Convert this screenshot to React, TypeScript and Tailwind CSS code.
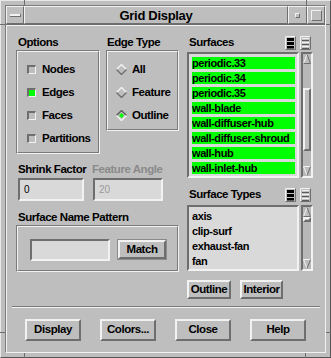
import React from "react";

const RAISED =
  "border-t-[#f2f2f2] border-l-[#f2f2f2] border-b-[#6e6e6e] border-r-[#6e6e6e]";
const SUNKEN =
  "border-t-[#6e6e6e] border-l-[#6e6e6e] border-b-[#f2f2f2] border-r-[#f2f2f2]";
const TXT = "text-[11.5px] font-bold tracking-[-0.45px]";
const LTXT = "text-[11px] font-bold tracking-[-0.42px]";

function Btn({ label, cls }: { label: string; cls: string }) {
  return (
    <div
      className={`flex items-center justify-center border-2 ${RAISED} ${TXT} leading-none ${cls}`}
    >
      {label}
    </div>
  );
}

function Etched({ cls, inner, children }: { cls: string; inner: string; children?: React.ReactNode }) {
  return (
    <div className={`border border-t-[#7a7a7a] border-l-[#7a7a7a] border-b-[#f2f2f2] border-r-[#f2f2f2] ${cls}`}>
      <div
        className={`h-full border border-t-[#f2f2f2] border-l-[#f2f2f2] border-b-[#7a7a7a] border-r-[#7a7a7a] ${inner}`}
      >
        {children}
      </div>
    </div>
  );
}

function Check({ on, label }: { on?: boolean; label: string }) {
  return (
    <div className="h-[23px] flex items-center gap-[6px]">
      <div
        className={`w-[9px] h-[9px] border-t-2 border-l-2 border-b border-r border-t-[#6e6e6e] border-l-[#6e6e6e] border-b-[#f2f2f2] border-r-[#f2f2f2] ${
          on ? "bg-[#00ff00]" : "bg-[#bebebe]"
        }`}
      />
      <span className={TXT}>{label}</span>
    </div>
  );
}

function Radio({ on, label }: { on?: boolean; label: string }) {
  return (
    <div className="h-[23px] flex items-center gap-[5px]">
      <svg width="11" height="11" viewBox="0 0 11 11">
        <polygon points="5.5,0.5 10.5,5.5 5.5,10.5 0.5,5.5" fill="#bebebe" />
        <path
          d="M0.5 5.5 L5.5 0.5 L10.5 5.5"
          stroke={on ? "#5a5a5a" : "#f2f2f2"}
          strokeWidth="1.4"
          fill="none"
        />
        <path
          d="M0.5 5.5 L5.5 10.5 L10.5 5.5"
          stroke={on ? "#f2f2f2" : "#6e6e6e"}
          strokeWidth="1.4"
          fill="none"
        />
        {on && <polygon points="5.5,3 8,5.5 5.5,8 3,5.5" fill="#00ff00" />}
      </svg>
      <span className={TXT}>{label}</span>
    </div>
  );
}

function ListIcon({ filled }: { filled?: boolean }) {
  return (
    <svg width="11" height="14" viewBox="0 0 11 14">
      <rect x="0" y="0" width="11" height="14" fill="#bebebe" />
      <path d="M0.5 13.5V0.5H10.5" stroke="#f2f2f2" fill="none" />
      <path d="M0.5 13.5H10.5V0.5" stroke="#6e6e6e" fill="none" />
      {filled ? (
        <>
          <rect x="2" y="2" width="7" height="3" fill="#000" />
          <rect x="2" y="6" width="7" height="3" fill="#000" />
          <rect x="2" y="10" width="7" height="2.5" fill="#000" />
        </>
      ) : (
        <>
          <path d="M2 2.5H9M2 6.5H9M2 10.5H9" stroke="#f2f2f2" />
          <path d="M2 4.5H9M2 8.5H9M2 12.5H9" stroke="#5a5a5a" />
        </>
      )}
    </svg>
  );
}

function ArrowUp() {
  return (
    <svg width="8" height="10" viewBox="0 0 8 10" className="block">
      <polygon points="4,0.5 7.5,9.5 0.5,9.5" fill="#bebebe" />
      <path d="M0.5 9.5 L4 0.5" stroke="#f2f2f2" fill="none" />
      <path d="M4 0.5 L7.5 9.5 L0.5 9.5" stroke="#6e6e6e" fill="none" />
    </svg>
  );
}

function ArrowDown() {
  return (
    <svg width="8" height="10" viewBox="0 0 8 10" className="block">
      <polygon points="0.5,0.5 7.5,0.5 4,9.5" fill="#bebebe" />
      <path d="M4 9.5 L0.5 0.5 L7.5 0.5" stroke="#f2f2f2" fill="none" />
      <path d="M7.5 0.5 L4 9.5" stroke="#6e6e6e" fill="none" />
    </svg>
  );
}

function Scrollbar({ thumbTop, thumbH }: { thumbTop: string; thumbH: string }) {
  return (
    <div className={`w-[12px] h-full border-2 ${SUNKEN} bg-[#b8b8b8] flex flex-col`}>
      <ArrowUp />
      <div className={`${thumbTop} ${thumbH} w-[8px] border-2 ${RAISED} bg-[#bebebe]`} />
      <div className="mt-auto">
        <ArrowDown />
      </div>
    </div>
  );
}

const surfaces = [
  "periodic.33",
  "periodic.34",
  "periodic.35",
  "wall-blade",
  "wall-diffuser-hub",
  "wall-diffuser-shroud",
  "wall-hub",
  "wall-inlet-hub",
];
const types = ["axis", "clip-surf", "exhaust-fan", "fan"];

function Tick({ cls }: { cls: string }) {
  return <div className={`absolute bg-[#6e6e6e] ${cls}`} />;
}

export default function App() {
  return (
    <div className="w-[331px] h-[358px] bg-[#bebebe] relative font-['Liberation_Sans',Arial,sans-serif] text-black select-none">
      <div className="w-full h-full border border-t-[#e8e8e8] border-l-[#e8e8e8] border-b-[#555555] border-r-[#555555] p-[4px]">
        <div className="w-full h-full border border-t-[#7a7a7a] border-l-[#7a7a7a] border-b-[#f2f2f2] border-r-[#f2f2f2] flex flex-col">
          {/* title bar */}
          <div className="h-[19px] flex border-b border-b-[#6e6e6e]">
            <div className={`w-[18px] border ${RAISED} flex items-center justify-center`}>
              <div className="w-[11px] h-[3px] bg-[#f2f2f2] border-b border-r border-b-[#6e6e6e] border-r-[#6e6e6e]" />
            </div>
            <div className={`flex-1 border ${RAISED} flex items-center justify-center text-[13px] font-bold tracking-[-0.3px] leading-none`}>
              Grid Display
            </div>
            <div className={`w-[19px] border ${RAISED} flex items-center justify-center`}>
              <div className="w-[5px] h-[5px] border border-t-[#f2f2f2] border-l-[#f2f2f2] border-b-[#6e6e6e] border-r-[#6e6e6e]" />
            </div>
            <div className={`w-[18px] border ${RAISED} flex items-center justify-center`}>
              <div className="w-[11px] h-[11px] border border-t-[#f2f2f2] border-l-[#f2f2f2] border-b-[#6e6e6e] border-r-[#6e6e6e]" />
            </div>
          </div>

          {/* client */}
          <div className="flex-1 flex flex-col border-t border-l border-t-[#f2f2f2] border-l-[#f2f2f2]">
            <div className="mt-[9px] ml-[9px] flex gap-[8px]">
              {/* left column */}
              <div className="w-[163px] flex flex-col">
                <div className="flex gap-[6px]">
                  <div className="flex flex-col">
                    <div className={`h-[15px] leading-[15px] pl-[2px] ${TXT}`}>Options</div>
                    <Etched cls="w-[84px] h-[104px]" inner="flex flex-col pt-[6px] pl-[9px]">
                      <Check label="Nodes" />
                      <Check label="Edges" on />
                      <Check label="Faces" />
                      <Check label="Partitions" />
                    </Etched>
                  </div>
                  <div className="flex flex-col">
                    <div className={`h-[15px] leading-[15px] pl-[1px] ${TXT}`}>Edge Type</div>
                    <Etched cls="w-[73px] h-[81px]" inner="flex flex-col pt-[6px] pl-[8px]">
                      <Radio label="All" />
                      <Radio label="Feature" />
                      <Radio label="Outline" on />
                    </Etched>
                  </div>
                </div>

                <div className="flex gap-[9px] pl-[2px] mt-[8px]">
                  <div className="w-[66px] flex flex-col">
                    <div className={`h-[14px] leading-[14px] whitespace-nowrap ${TXT}`}>Shrink Factor</div>
                    <div className={`mt-[2px] h-[23px] border-2 ${SUNKEN} bg-[#d9d9d9] flex items-center pl-[4px] text-[10px] leading-none`}>
                      0
                    </div>
                  </div>
                  <div className="w-[70px] flex flex-col">
                    <div className={`h-[14px] leading-[14px] whitespace-nowrap -ml-[1px] ${TXT} text-[#8a8a8a]`}>
                      Feature Angle
                    </div>
                    <div className={`mt-[2px] h-[23px] border-2 ${SUNKEN} bg-[#d9d9d9] flex items-center pl-[4px] text-[10px] leading-none text-[#9a9a9a]`}>
                      20
                    </div>
                  </div>
                </div>

                <div className={`mt-[9px] h-[14px] leading-[14px] pl-[2px] ${TXT}`}>Surface Name Pattern</div>
                <Etched cls="mt-[1px] w-[163px] h-[47px]" inner="flex items-start gap-[8px] pt-[12px] pl-[12px]">
                  <div className={`w-[80px] h-[22px] border-2 ${SUNKEN} bg-[#d9d9d9]`} />
                  <Btn label="Match" cls="mt-[1px] w-[48px] h-[19px] outline outline-1 outline-[#8a8a8a]" />
                </Etched>
              </div>

              {/* right column */}
              <div className="w-[126px] flex flex-col">
                <div className="h-[15px] flex items-center justify-between pr-[2px]">
                  <span className={`pl-[2px] ${TXT}`}>Surfaces</span>
                  <div className="flex gap-[4px]">
                    <ListIcon filled />
                    <ListIcon />
                  </div>
                </div>
                <div className="mt-[2px] h-[126px] flex gap-[2px]">
                  <div className={`flex-1 border-2 ${SUNKEN} bg-[#d9d9d9] pt-[3px] pl-[3px] pr-[2px] overflow-hidden`}>
                    {surfaces.map((s) => (
                      <div
                        key={s}
                        className={`h-[12px] mb-[3px] bg-[#00ff00] leading-[12px] whitespace-nowrap overflow-hidden ${LTXT}`}
                      >
                        {s}
                      </div>
                    ))}
                  </div>
                  <Scrollbar thumbTop="mt-[24px]" thumbH="h-[63px]" />
                </div>

                <div className="mt-[9px] h-[15px] flex items-center justify-between pr-[2px]">
                  <span className={`pl-[2px] ${TXT}`}>Surface Types</span>
                  <div className="flex gap-[4px]">
                    <ListIcon filled />
                    <ListIcon />
                  </div>
                </div>
                <div className="mt-[3px] h-[66px] flex gap-[2px]">
                  <div className={`flex-1 border-2 ${SUNKEN} bg-[#d9d9d9] pt-[3px] pl-[3px] pr-[2px] overflow-hidden`}>
                    {types.map((s) => (
                      <div key={s} className={`h-[12px] mb-[3px] leading-[12px] whitespace-nowrap ${LTXT}`}>
                        {s}
                      </div>
                    ))}
                  </div>
                  <Scrollbar thumbTop="mt-[0px]" thumbH="h-[5px]" />
                </div>

                <div className="mt-[9px] flex gap-[9px]">
                  <Btn label="Outline" cls="w-[44px] h-[19px]" />
                  <Btn label="Interior" cls="w-[43px] h-[19px]" />
                </div>
              </div>
            </div>

            {/* separator */}
            <div className="mt-[7px] mx-[5px] h-[2px] border-t border-b border-t-[#7a7a7a] border-b-[#f2f2f2]" />

            {/* bottom buttons */}
            <div className="mt-[11px] ml-[18px] flex gap-[19px]">
              <Btn label="Display" cls="w-[56px] h-[22px]" />
              <Btn label="Colors..." cls="w-[56px] h-[22px]" />
              <Btn label="Close" cls="w-[56px] h-[22px]" />
              <Btn label="Help" cls="w-[56px] h-[22px]" />
            </div>
          </div>
        </div>
      </div>

      {/* frame resize-handle ticks */}
      <Tick cls="left-[24px] top-0 w-[1px] h-[5px]" />
      <Tick cls="left-[306px] top-0 w-[1px] h-[5px]" />
      <Tick cls="left-0 top-[24px] w-[5px] h-[1px]" />
      <Tick cls="right-0 top-[24px] w-[5px] h-[1px]" />
      <Tick cls="left-[24px] bottom-0 w-[1px] h-[5px]" />
      <Tick cls="left-[305px] bottom-0 w-[1px] h-[5px]" />
      <Tick cls="left-0 top-[332px] w-[5px] h-[1px]" />
      <Tick cls="right-0 top-[332px] w-[5px] h-[1px]" />
    </div>
  );
}
